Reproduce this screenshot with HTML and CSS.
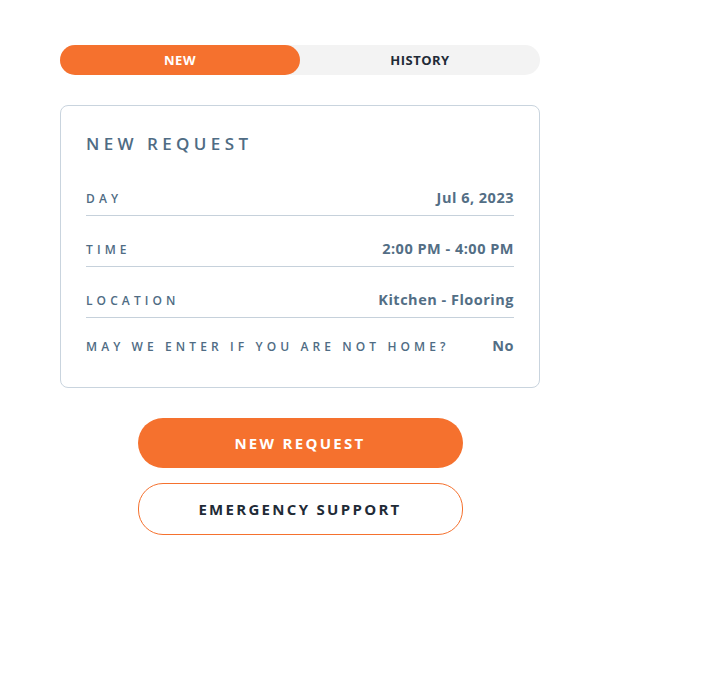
FILE: index.html
```html
<!DOCTYPE html>
<html lang="en">
<head>
  <meta charset="UTF-8">
  <meta name="viewport" content="width=device-width, initial-scale=1.0">
  <title>Requests</title>
  <link rel="stylesheet" href="styles.css">
</head>
<body>
  <div class="panel">
    <!-- Tabs -->
    <div class="tabs">
      <button class="tab active">NEW</button>
      <button class="tab">HISTORY</button>
    </div>

    <!-- Request Card -->
    <div class="card">
      <h2 class="card-title">NEW REQUEST</h2>
      <div class="row">
        <span class="label">DAY</span>
        <span class="value">Jul 6, 2023</span>
      </div>
      <div class="row">
        <span class="label">TIME</span>
        <span class="value">2:00 PM - 4:00 PM</span>
      </div>
      <div class="row">
        <span class="label">LOCATION</span>
        <span class="value">Kitchen - Flooring</span>
      </div>
      <div class="row last">
        <span class="label">MAY WE ENTER IF YOU ARE NOT HOME?</span>
        <span class="value">No</span>
      </div>
    </div>

    <!-- Actions -->
    <div class="actions">
      <button class="btn btn-primary">NEW REQUEST</button>
      <button class="btn btn-outline">EMERGENCY SUPPORT</button>
    </div>
  </div>
</body>
</html>
```
FILE: styles.css
```css
/* General Styles */
body {
  font-family: 'Open Sans', 'Liberation Sans', sans-serif;
  background: #fff;
  margin: 0;
  padding: 45px 0 0 60px;
}

.panel {
  width: 480px;
}

/* Tabs */
.tabs {
  display: flex;
  height: 30px;
  background: #f3f3f3;
  border-radius: 15px;
}

.tab {
  flex: 1;
  border: none;
  background: transparent;
  border-radius: 15px;
  font-family: inherit;
  font-size: 13px;
  font-weight: 700;
  letter-spacing: 0.5px;
  color: #1f2b37;
  cursor: pointer;
}

.tab.active {
  background: #f5712e;
  color: #fff;
}

/* Card */
.card {
  margin-top: 30px;
  border: 1px solid #c9d4de;
  border-radius: 8px;
  padding: 28px 25px 32px;
}

.card-title {
  margin: 0 0 11px;
  font-size: 17px;
  line-height: 20px;
  font-weight: 600;
  letter-spacing: 4.4px;
  color: #4f6c84;
}

.row {
  display: flex;
  justify-content: space-between;
  align-items: baseline;
  padding: 24px 0 8px;
  border-bottom: 1px solid #c6d1db;
}

.row.last {
  border-bottom: none;
  padding: 19px 0 0;
}

.label {
  font-size: 12px;
  font-weight: 600;
  letter-spacing: 4.1px;
  color: #4f6c84;
}

.value {
  font-size: 14.5px;
  line-height: 18px;
  font-weight: 700;
  letter-spacing: 0.5px;
  color: #536e85;
}

/* Actions */
.actions {
  display: flex;
  flex-direction: column;
  align-items: center;
  gap: 15px;
  margin-top: 30px;
}

.btn {
  width: 325px;
  height: 50px;
  border-radius: 25px;
  font-family: inherit;
  font-size: 15px;
  font-weight: 700;
  letter-spacing: 2.3px;
  cursor: pointer;
}

.btn-primary {
  background: #f5712e;
  border: none;
  color: #fff;
}

.btn-outline {
  height: 52px;
  background: #fff;
  border: 1px solid #f5712e;
  color: #1f2b37;
}
```
